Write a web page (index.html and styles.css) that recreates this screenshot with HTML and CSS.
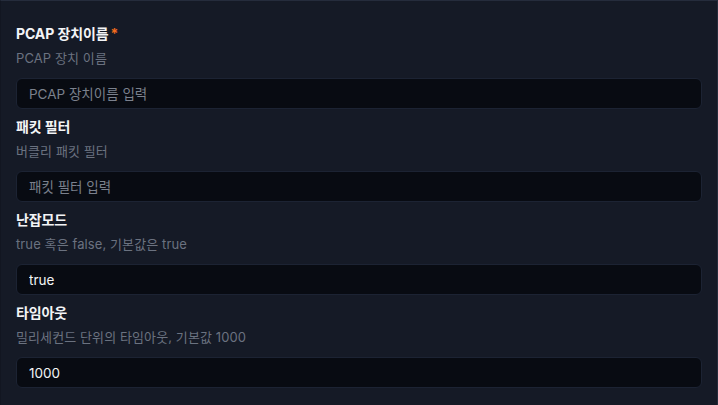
FILE: index.html
```html
<!DOCTYPE html>
<html lang="ko">
<head>
<meta charset="utf-8">
<link rel="stylesheet" href="styles.css">
</head>
<body>
<div class="panel">
  <div class="field">
    <div class="label">PCAP 장치이름<span class="req">*</span></div>
    <div class="desc">PCAP 장치 이름</div>
    <input class="input" type="text" placeholder="PCAP 장치이름 입력">
  </div>
  <div class="field">
    <div class="label">패킷 필터</div>
    <div class="desc">버클리 패킷 필터</div>
    <input class="input" type="text" placeholder="패킷 필터 입력">
  </div>
  <div class="field">
    <div class="label">난잡모드</div>
    <div class="desc">true 혹은 false, 기본값은 true</div>
    <input class="input" type="text" value="true">
  </div>
  <div class="field">
    <div class="label">타임아웃</div>
    <div class="desc">밀리세컨드 단위의 타임아웃, 기본값 1000</div>
    <input class="input" type="text" value="1000">
  </div>
</div>
</body>
</html>
```
FILE: styles.css
```css
html, body {
  margin: 0;
  padding: 0;
  background: #151a26;
}
body {
  font-family: Inter, "Noto Sans CJK KR", sans-serif;
  width: 718px;
  height: 405px;
  overflow: hidden;
}
.panel {
  box-sizing: border-box;
  height: 405px;
  border-top: 1px solid #252c3c;
  border-right: 1px solid #252c3c;
  border-left: 1px solid #121621;
  padding: 23px 15px 0 15px;
  display: flex;
  flex-direction: column;
  gap: 8px;
}
.field {
  display: flex;
  flex-direction: column;
}
.label {
  font-size: 14px;
  line-height: 20px;
  font-weight: 700;
  color: #f3f4f6;
  letter-spacing: -0.1px;
}
.req {
  color: #f26b1d;
  margin-left: 2px;
}
.desc {
  margin-top: 4px;
  font-size: 13px;
  line-height: 20px;
  color: #6b7280;
  letter-spacing: 0.1px;
}
.input {
  margin-top: 10px;
  box-sizing: border-box;
  height: 31px;
  width: 100%;
  background: #080b12;
  border: 1px solid #1c2333;
  border-radius: 6px;
  padding: 0 12px;
  font-family: Inter, "Noto Sans CJK KR", sans-serif;
  font-size: 13.5px;
  color: #f3f4f6;
  outline: none;
}
.input::placeholder {
  color: #7b818d;
}
```
